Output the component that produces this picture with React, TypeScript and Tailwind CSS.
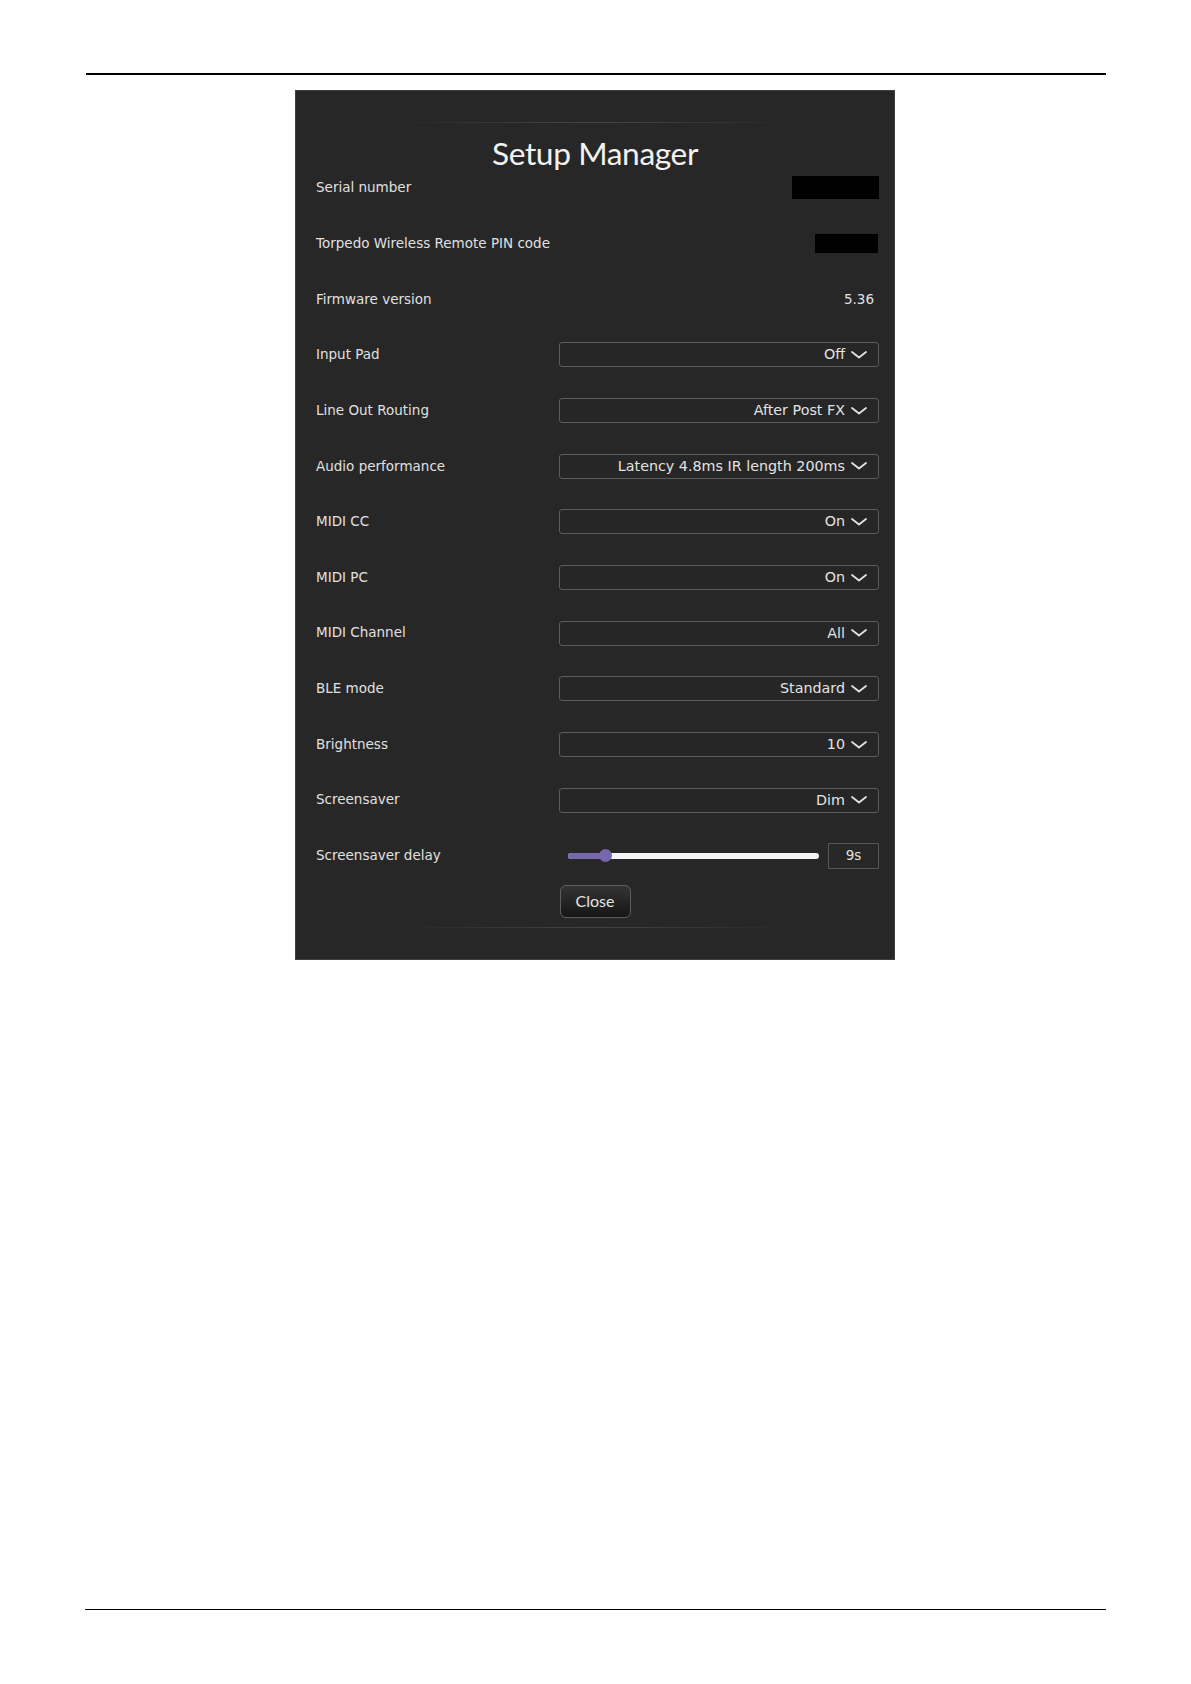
import React from "react";

const labelFont = { fontFamily: '"DejaVu Sans", "Liberation Sans", sans-serif' };

function Chevron() {
  return (
    <svg width="16" height="8" viewBox="0 0 16 8" className="shrink-0">
      <polyline points="1,1 8,6.5 15,1" fill="none" stroke="#e2e2e2" strokeWidth="1.8" strokeLinecap="round" strokeLinejoin="round" />
    </svg>
  );
}

function Dropdown({ value }: { value: string }) {
  return (
    <div className="w-[320px] h-[25px] border border-[#5c5c5c] rounded-[3px] flex items-center justify-end gap-[6px] pr-[11px] bg-[#262626]">
      <span className="text-[14.3px] text-[#e2e2e2] leading-none -mt-px">{value}</span>
      <Chevron />
    </div>
  );
}

function Row({ label, children }: { label: string; children?: React.ReactNode }) {
  return (
    <div className="h-[55.67px] flex items-center justify-between pl-[20px] pr-[15px]">
      <span className="text-[13.5px] text-[#e0e0e0] leading-none">{label}</span>
      {children}
    </div>
  );
}

export default function App() {
  const dropdowns: [string, string][] = [
    ["Input Pad", "Off"],
    ["Line Out Routing", "After Post FX"],
    ["Audio performance", "Latency 4.8ms IR length 200ms"],
    ["MIDI CC", "On"],
    ["MIDI PC", "On"],
    ["MIDI Channel", "All"],
    ["BLE mode", "Standard"],
    ["Brightness", "10"],
    ["Screensaver", "Dim"],
  ];
  return (
    <div className="w-[1191px] h-[1684px] bg-white flex flex-col" style={labelFont}>
      <div className="mt-[73px] ml-[86px] w-[1020px] h-[2px] bg-black" />
      <div className="mt-[15px] ml-[295px] w-[600px] h-[870px] bg-[#272727] border border-[#3e3e3e] flex flex-col">
        <div className="mt-[31px] mx-auto w-[396px] h-px bg-gradient-to-r from-transparent via-[#474747] to-transparent" />
        <div
          className="h-[37.15px] pt-[12px] text-center text-[31.7px] leading-[37px] text-[#f2f2f2] tracking-[-0.4px]"
          style={{ fontFamily: '"Lato", "Open Sans", sans-serif' }}
        >
          Setup Manager
        </div>
        <Row label="Serial number">
          <div className="w-[87px] h-[23px] bg-black" />
        </Row>
        <Row label="Torpedo Wireless Remote PIN code">
          <div className="w-[63px] h-[19px] bg-black mr-px" />
        </Row>
        <Row label="Firmware version">
          <span className="text-[13.5px] text-[#e0e0e0] leading-none pr-[5px]">5.36</span>
        </Row>
        {dropdowns.map(([l, v]) => (
          <Row key={l} label={l}>
            <Dropdown value={v} />
          </Row>
        ))}
        <Row label="Screensaver delay">
          <div className="w-[320px] flex items-center">
            <div className="ml-[9px] w-[251px] h-[6px] rounded-full bg-[#f4f4f4] relative">
              <div className="w-[37px] h-[6px] rounded-l-full bg-[#7767ad]" />
              <div className="absolute left-[31px] top-[-3.5px] w-[13px] h-[13px] rounded-full bg-[#7767ad]" />
            </div>
            <div className="ml-[9px] w-[51px] h-[26px] border border-[#565656] flex items-center justify-center text-[13.5px] text-[#e0e0e0] leading-none">
              9s
            </div>
          </div>
        </Row>
        <button
          className="mt-[1px] mx-auto w-[71px] h-[33px] rounded-[6px] border border-[#5e5e5e] bg-gradient-to-b from-[#343434] to-[#161616] text-[16px] text-[#e4e4e4] leading-none"
          style={{ fontFamily: '"Lato", "Open Sans", sans-serif' }}
        >
          Close
        </button>
        <div className="mt-[9px] mx-auto w-[390px] h-px bg-gradient-to-r from-transparent via-[#444444] to-transparent" />
      </div>
      <div className="mt-[649px] ml-[85px] w-[1021px] h-px bg-black" />
    </div>
  );
}
